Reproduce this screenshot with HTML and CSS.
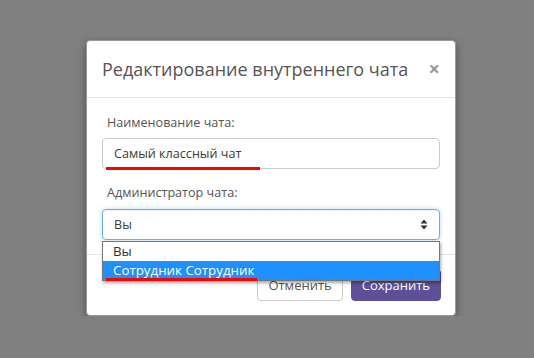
FILE: index.html
```html
<!DOCTYPE html>
<html lang="ru">
<head>
    <meta charset="UTF-8">
    <meta name="viewport" content="width=device-width, initial-scale=1.0">
    <title>Редактирование внутреннего чата</title>
    <link rel="stylesheet" href="styles.css">
</head>
<body>
    <div class="modal">
        <div class="modal-header">
            <h4 class="modal-title">Редактирование внутреннего чата</h4>
            <span class="close">&times;</span>
        </div>
        <div class="modal-body">
            <div class="form-group">
                <label for="chat-name">Наименование чата:</label>
                <div class="field">
                    <input type="text" id="chat-name" class="form-control" value="Самый классный чат">
                    <span class="mark mark-name"></span>
                </div>
            </div>
            <div class="form-group last">
                <label for="chat-admin">Администратор чата:</label>
                <div class="field">
                    <div id="chat-admin" class="form-control select-box">
                        <span>Вы</span>
                        <svg class="arrows" width="8" height="11" viewBox="0 0 8 11">
                            <path d="M0.5 4.5 L4 0.5 L7.5 4.5 Z" fill="#333"/>
                            <path d="M0.5 6.5 L4 10.5 L7.5 6.5 Z" fill="#333"/>
                        </svg>
                    </div>
                    <ul class="options">
                        <li>Вы</li>
                        <li class="active">Сотрудник Сотрудник</li>
                    </ul>
                    <span class="mark mark-admin"></span>
                </div>
            </div>
        </div>
        <div class="modal-footer">
            <button class="btn btn-default">Отменить</button>
            <button class="btn btn-primary">Сохранить</button>
        </div>
    </div>
</body>
</html>
```

FILE: styles.css
```css
body {
    margin: 0;
    background-color: #808080;
    font-family: "Open Sans", "DejaVu Sans", sans-serif;
    font-size: 12.6px;
    color: #555;
}
.modal {
    width: 370px;
    box-sizing: border-box;
    margin: 40px 0 0 86px;
    background-color: #fff;
    border: 1px solid #999;
    border-radius: 4px;
    box-shadow: 0 3px 9px rgba(0, 0, 0, 0.4);
}
.modal-header {
    display: flex;
    justify-content: space-between;
    align-items: center;
    height: 56px;
    padding: 0 15px;
    border-bottom: 1px solid #e5e5e5;
}
.modal-title {
    margin: 0;
    font-size: 18px;
    font-weight: normal;
    color: #555;
}
.close {
    font-size: 20px;
    font-weight: bold;
    color: #999;
    line-height: 1;
}
.modal-body {
    padding: 15px 15px 14px;
}
.form-group {
    margin-bottom: 14px;
}
.form-group.last {
    margin-bottom: 0;
}
label {
    display: block;
    line-height: 20px;
    margin-bottom: 5px;
    padding-left: 5px;
}
.form-group.last label {
    margin-bottom: 6px;
}
.field {
    position: relative;
}
.form-control {
    display: block;
    width: 100%;
    height: 31px;
    box-sizing: border-box;
    padding: 0 11px;
    border: 1px solid #ccc;
    border-radius: 4px;
    font-family: inherit;
    font-size: 12.6px;
    color: #3a3a3a;
}
.select-box {
    display: flex;
    align-items: center;
    justify-content: space-between;
    border-color: #66afe9;
    box-shadow: inset 0 1px 1px rgba(0, 0, 0, 0.05), 0 0 4px rgba(102, 175, 233, 0.5);
}
.arrows {
    margin-right: 0;
}
.options {
    position: absolute;
    top: 32px;
    left: 0;
    right: 0;
    margin: 0;
    padding: 0;
    list-style: none;
    background-color: #fff;
    border: 1px solid #767676;
    box-shadow: 1px 2px 3px rgba(0, 0, 0, 0.35);
    font-size: 13.33px;
}
.options li {
    height: 19px;
    line-height: 19px;
    padding: 0 10px;
    color: #333;
}
.options li.active {
    background-color: #1e90ff;
    color: #fff;
}
.mark {
    position: absolute;
    left: 4px;
    height: 3px;
    background-color: #f00;
}
.mark-name {
    top: 29px;
    width: 154px;
}
.mark-admin {
    top: 69px;
    width: 151px;
}
.modal-footer {
    display: flex;
    justify-content: flex-end;
    gap: 8px;
    padding: 14px 14px 14px 15px;
    border-top: 1px solid #e5e5e5;
}
.btn {
    height: 32px;
    padding: 0 10px;
    border-radius: 4px;
    font-family: inherit;
    font-size: 13px;
    cursor: pointer;
}
.btn-default {
    background-color: #fff;
    border: 1px solid #ccc;
    color: #555;
}
.btn-primary {
    background-color: #5e4f99;
    border: 1px solid #5e4f99;
    color: #fff;
}
```
